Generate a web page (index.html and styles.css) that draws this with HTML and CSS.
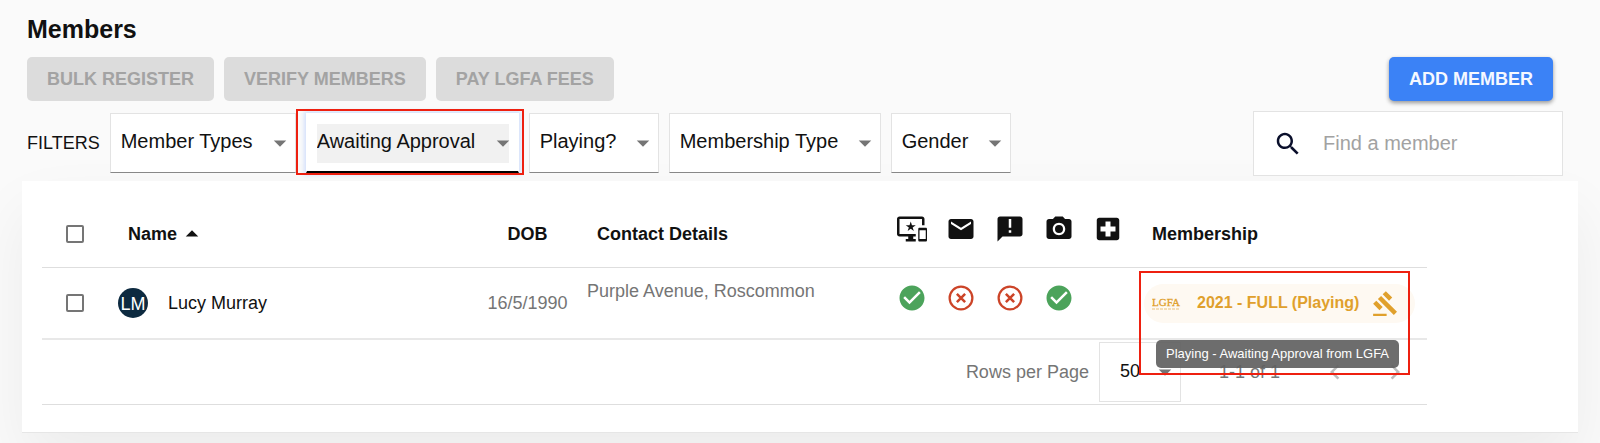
FILE: index.html
```
<!DOCTYPE html>
<html lang="en">
<head>
    <meta charset="UTF-8">
    <meta name="viewport" content="width=device-width, initial-scale=1.0">
    <title>Members</title>
    <link rel="stylesheet" href="styles.css">
</head>
<body>
    <!-- shared icons -->
    <svg class="sprite" aria-hidden="true">
        <symbol id="arrow" viewBox="0 0 24 24"><path d="M7 10l5 5 5-5z"/></symbol>
        <symbol id="check" viewBox="0 0 24 24"><path d="M12 2C6.48 2 2 6.48 2 12s4.48 10 10 10 10-4.48 10-10S17.52 2 12 2zm-2 15l-5-5 1.41-1.41L10 14.17l7.59-7.59L19 8l-9 9z"/></symbol>
        <symbol id="cross" viewBox="0 0 24 24"><circle cx="12" cy="12" r="9.1" fill="none" stroke="currentColor" stroke-width="1.8"/><path d="M8.7 8.7l6.6 6.6M15.3 8.7l-6.6 6.6" fill="none" stroke="currentColor" stroke-width="2"/></symbol>
    </svg>

    <header>
        <h1>Members</h1>
        <div class="actions">
            <button type="button" class="btn" disabled>BULK REGISTER</button>
            <button type="button" class="btn" disabled>VERIFY MEMBERS</button>
            <button type="button" class="btn" disabled>PAY LGFA FEES</button>
            <button type="button" class="btn btn-primary">ADD MEMBER</button>
        </div>
        <div class="toolbar">
            <div class="filters">
                <span class="filters-label">FILTERS</span>
                <div class="select-box">
                    <select aria-label="Member Types"><option>Member Types</option></select>
                    <svg class="icon arrow"><use href="#arrow"/></svg>
                </div>
                <div class="select-box focused">
                    <select aria-label="Awaiting Approval"><option>Awaiting Approval</option></select>
                    <svg class="icon arrow"><use href="#arrow"/></svg>
                    <div class="highlight"></div>
                </div>
                <div class="select-box">
                    <select aria-label="Playing?"><option>Playing?</option></select>
                    <svg class="icon arrow"><use href="#arrow"/></svg>
                </div>
                <div class="select-box">
                    <select aria-label="Membership Type"><option>Membership Type</option></select>
                    <svg class="icon arrow"><use href="#arrow"/></svg>
                </div>
                <div class="select-box">
                    <select aria-label="Gender"><option>Gender</option></select>
                    <svg class="icon arrow"><use href="#arrow"/></svg>
                </div>
            </div>
            <label class="search">
                <svg class="icon" viewBox="0 0 24 24"><path d="M15.5 14h-.79l-.28-.27C15.41 12.59 16 11.11 16 9.5 16 5.91 13.09 3 9.5 3S3 5.91 3 9.5 5.91 16 9.5 16c1.61 0 3.09-.59 4.23-1.57l.27.28v.79l5 4.99L20.49 19l-4.99-5zm-6 0C7.01 14 5 11.99 5 9.5S7.01 5 9.5 5 14 7.01 14 9.5 11.99 14 9.5 14z"/></svg>
                <input type="text" placeholder="Find a member" aria-label="Find a member">
            </label>
        </div>
    </header>

    <main class="panel">
        <table>
            <colgroup>
                <col class="col-check">
                <col>
                <col class="col-dob">
                <col class="col-contact">
                <col class="col-icon" span="5">
                <col class="col-membership">
            </colgroup>
            <thead>
                <tr>
                    <th class="check-cell"><input type="checkbox" aria-label="Select all members"></th>
                    <th class="name-head">
                        <div class="sort">Name <svg class="icon"><use href="#arrow"/></svg></div>
                    </th>
                    <th class="dob">DOB</th>
                    <th class="contact-head">Contact Details</th>
                    <th class="icon-cell"><svg class="icon" viewBox="0 0 24 24"><path d="M23 11.01L18 11c-.55 0-1 .45-1 1v9c0 .55.45 1 1 1h5c.55 0 1-.45 1-1v-9c0-.55-.45-.99-1-.99zM23 20h-5v-7h5v7zM20 2H2C.89 2 0 2.89 0 4v12c0 1.1.89 2 2 2h7v2H7v2h8v-2h-2v-2h2v-2H2V4h18v5h2V4c0-1.11-.9-2-2-2zm-8.03 7L11 6l-.97 3H7l2.47 1.76-.94 2.91 2.47-1.8 2.47 1.8-.94-2.91L15 9h-3.03z"/></svg></th>
                    <th class="icon-cell"><svg class="icon" viewBox="0 0 24 24"><path d="M20 4H4c-1.1 0-1.99.9-1.99 2L2 18c0 1.1.9 2 2 2h16c1.1 0 2-.9 2-2V6c0-1.1-.9-2-2-2zm0 4l-8 5-8-5V6l8 5 8-5v2z"/></svg></th>
                    <th class="icon-cell"><svg class="icon" viewBox="0 0 24 24"><path d="M20 2H4c-1.1 0-1.99.9-1.99 2L2 22l4-4h14c1.1 0 2-.9 2-2V4c0-1.1-.9-2-2-2zm-7 13h-2v-2h2v2zm0-4h-2V4h2v7z"/></svg></th>
                    <th class="icon-cell"><svg class="icon" viewBox="0 0 24 24"><path fill-rule="evenodd" d="M9 2L7.17 4H4c-1.1 0-2 .9-2 2v12c0 1.1.9 2 2 2h16c1.1 0 2-.9 2-2V6c0-1.1-.9-2-2-2h-3.17L15 2H9zm3 15c-2.76 0-5-2.24-5-5s2.24-5 5-5 5 2.24 5 5-2.24 5-5 5zm0-1.8a3.2 3.2 0 1 0 0-6.4 3.2 3.2 0 0 0 0 6.4z"/></svg></th>
                    <th class="icon-cell"><svg class="icon" viewBox="0 0 24 24"><path d="M19 3H5c-1.1 0-1.99.9-1.99 2L3 19c0 1.1.9 2 2 2h14c1.1 0 2-.9 2-2V5c0-1.1-.9-2-2-2zm-1 11h-4v4h-4v-4H6v-4h4V6h4v4h4v4z"/></svg></th>
                    <th class="membership-head">Membership</th>
                </tr>
            </thead>
            <tbody>
                <tr>
                    <td class="check-cell"><input type="checkbox" aria-label="Select Lucy Murray"></td>
                    <td class="name">
                        <div class="person"><span class="avatar">LM</span> Lucy Murray</div>
                    </td>
                    <td class="dob">16/5/1990</td>
                    <td class="contact">Purple Avenue, Roscommon</td>
                    <td class="icon-cell yes"><svg class="icon"><use href="#check"/></svg></td>
                    <td class="icon-cell no"><svg class="icon"><use href="#cross"/></svg></td>
                    <td class="icon-cell no"><svg class="icon"><use href="#cross"/></svg></td>
                    <td class="icon-cell yes"><svg class="icon"><use href="#check"/></svg></td>
                    <td class="icon-cell"></td>
                    <td class="membership">
                        <div class="chip">
                            <svg class="lgfa" viewBox="0 0 30 18">
                                <text x="0" y="12">LGFA</text>
                                <path d="M0 15h28" stroke-dasharray="3 1"/>
                            </svg>
                            <span class="chip-text">2021 - FULL (Playing)</span>
                            <svg class="gavel" viewBox="0 0 24 24"><path d="M1 21h12v2H1zM5.245 8.07l2.83-2.827 14.14 14.142-2.828 2.828zM12.317 1l5.657 5.656-2.83 2.83-5.654-5.66zM3.825 9.485l5.657 5.657-2.828 2.828-5.657-5.657z"/></svg>
                            <div class="tooltip" role="tooltip">Playing - Awaiting Approval from LGFA</div>
                            <div class="highlight"></div>
                        </div>
                    </td>
                </tr>
            </tbody>
            <tfoot>
                <tr>
                    <td colspan="10">
                        <div class="pagination">
                            <label for="rows">Rows per Page</label>
                            <div class="select-box rows-box">
                                <select id="rows"><option>50</option></select>
                                <svg class="icon arrow"><use href="#arrow"/></svg>
                            </div>
                            <span class="range">1-1 of 1</span>
                            <button type="button" class="page-btn" aria-label="Previous page" disabled><svg class="icon" viewBox="0 0 24 24"><path d="M15.41 7.41L14 6l-6 6 6 6 1.41-1.41L10.83 12z"/></svg></button>
                            <button type="button" class="page-btn" aria-label="Next page" disabled><svg class="icon" viewBox="0 0 24 24"><path d="M10 6L8.59 7.41 13.17 12l-4.58 4.59L10 18l6-6z"/></svg></button>
                        </div>
                    </td>
                </tr>
            </tfoot>
        </table>
    </main>
</body>
</html>
```
FILE: styles.css
```
* {
    box-sizing: border-box;
}

body {
    margin: 0;
    padding: 14px 22px 11px;
    background-color: #fafafa;
    font-family: "Liberation Sans", Arial, sans-serif;
    font-size: 18px;
    color: #111;
}

button, input, select {
    font-family: inherit;
}

.sprite {
    display: none;
}

.icon {
    display: block;
    flex: none;
    width: 30px;
    height: 30px;
    fill: currentColor;
}

header {
    padding: 0 15px 5px 5px;
}

h1 {
    margin: 0 0 13px;
    font-size: 25px;
    line-height: 30px;
}

/* buttons */
.actions {
    display: flex;
    gap: 10px;
    margin-bottom: 10px;
    padding-right: 10px;
}

.btn {
    height: 44px;
    padding: 0 20px;
    border: none;
    border-radius: 5px;
    background-color: #dcdcdc;
    color: #a3a3a3;
    font-size: 18px;
    font-weight: 700;
}

.btn-primary {
    margin-left: auto;
    background-color: #3b82f6;
    color: #f5f8ff;
    box-shadow: 0 2px 4px rgba(0, 0, 0, 0.4);
    cursor: pointer;
}

/* filters */
.toolbar {
    display: flex;
    justify-content: space-between;
    align-items: center;
}

.filters {
    display: flex;
    align-items: center;
    gap: 10px;
    padding-bottom: 2px;
}

.filters-label {
    line-height: 24px;
}

.select-box {
    position: relative;
    height: 60px;
    padding: 10px 9px 10px 10px;
    background-color: #fff;
    border: 1px solid #e3e3e3;
    border-bottom-color: #888;
}

.select-box select {
    appearance: none;
    display: block;
    height: 39px;
    padding: 0 32px 4px 0;
    margin: 0;
    border: none;
    border-radius: 0;
    outline: none;
    background-color: transparent;
    color: #111;
    font-size: 20px;
}

.select-box .arrow {
    position: absolute;
    top: 14px;
    right: 0;
    color: #757575;
    pointer-events: none;
}

.focused {
    border-color: #fff;
    border-bottom: 2px solid #000;
    box-shadow: 0 0 4px 2px #d3e0fb;
}

.focused select {
    background-color: #f1f1f1;
}

.highlight {
    position: absolute;
    border: 2px solid #ee2010;
    pointer-events: none;
}

.focused .highlight {
    inset: -5px -6px -4px -11px;
}

.search {
    display: flex;
    align-items: center;
    gap: 20px;
    width: 310px;
    height: 65px;
    padding: 0 19px;
    background-color: #fff;
    border: 1px solid #e3e3e3;
    color: #0a0f2b;
}

.search input {
    width: 100%;
    min-width: 0;
    padding: 0;
    border: none;
    outline: none;
    background: none;
    font-size: 20px;
}

.search input::placeholder {
    color: #a2a2a2;
}

/* table */
.panel {
    padding: 20px 151px 27px 20px;
    background-color: #fff;
    border-bottom: 1px solid #e6e6e6;
    box-shadow: 0 30px 60px rgba(0, 0, 0, 0.06);
}

table {
    width: 100%;
    table-layout: fixed;
    border-collapse: separate;
    border-spacing: 0;
}

.col-check {
    width: 66px;
}

.col-dob {
    width: 99px;
}

.col-contact {
    width: 310px;
}

.col-icon {
    width: 49px;
}

.col-membership {
    width: 295px;
}

th, td {
    padding: 0;
    border-bottom: 1px solid #dedede;
    text-align: left;
}

thead th {
    height: 67px;
}

tbody td {
    height: 72px;
    border-bottom: 2px solid #e8e8e8;
}

.check-cell input {
    appearance: none;
    display: block;
    width: 18px;
    height: 18px;
    margin: 0 24px;
    border: 2px solid #757575;
    border-radius: 2px;
}

.name-head, .contact-head, .membership-head {
    padding-left: 20px;
}

.sort {
    display: flex;
    align-items: center;
}

.sort .icon {
    transform: rotate(180deg);
}

.person {
    display: flex;
    align-items: center;
    gap: 20px;
    padding-left: 10px;
}

.avatar {
    display: flex;
    justify-content: center;
    align-items: center;
    width: 30px;
    height: 30px;
    padding-top: 2px;
    border-radius: 50%;
    background-color: #0d2a40;
    color: #fff;
}

.dob {
    text-align: center;
}

td.dob, .contact, .pagination {
    color: #757575;
}

.contact {
    padding: 13px 10px;
    vertical-align: top;
}

.icon-cell {
    padding-bottom: 10px;
}

.icon-cell .icon {
    margin: 0 auto;
}

.yes {
    color: #4ca35b;
}

.no {
    color: #cc4428;
}

.membership {
    padding: 0 12px;
}

/* membership chip */
.chip {
    position: relative;
    display: flex;
    align-items: center;
    height: 39px;
    padding: 0 16px 0 8px;
    border-radius: 20px;
    background-color: #fef9f2;
    color: #e0a02c;
}

.lgfa {
    width: 30px;
    height: 18px;
    fill: currentColor;
}

.lgfa text {
    font-family: "Liberation Serif", serif;
    font-size: 11px;
    stroke: currentColor;
    stroke-width: 0.3px;
}

.lgfa path {
    stroke: currentColor;
    opacity: 0.6;
}

.chip-text {
    margin-left: 15px;
    font-size: 16px;
    font-weight: 700;
    white-space: nowrap;
}

.gavel {
    width: 27px;
    height: 27px;
    margin-left: auto;
    fill: currentColor;
}

.tooltip {
    position: absolute;
    z-index: 1;
    top: 56px;
    left: 12px;
    padding: 0 10px;
    border-radius: 5px;
    background-color: rgba(97, 97, 97, 0.92);
    color: #fff;
    font-size: 13px;
    line-height: 28px;
    white-space: nowrap;
}

.chip .highlight {
    z-index: 2;
    inset: -13px 5px -52px -5px;
}

/* pagination */
.pagination {
    display: flex;
    justify-content: flex-end;
    align-items: center;
    height: 64px;
    padding-right: 2px;
}

.rows-box {
    margin: 0 38px 0 10px;
    border-bottom-color: #e3e3e3;
}

.rows-box select {
    padding: 0 30px 4px 10px;
    font-size: 18px;
}

.range {
    margin-right: 25px;
}

.page-btn {
    padding: 0 15px;
    border: none;
    background: none;
    color: #bdbdbd;
}
```
